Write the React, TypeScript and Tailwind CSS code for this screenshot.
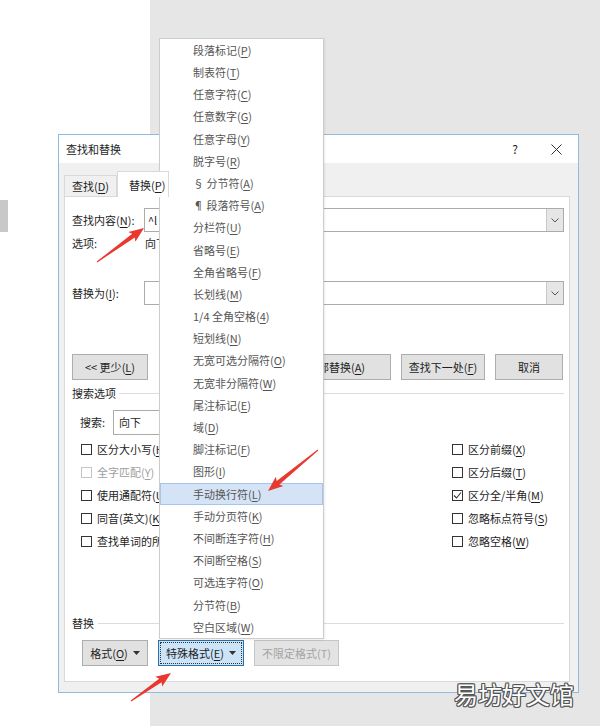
import React from "react";

// accelerator letter inside "(X)" gets underlined
const Acc = ({ text }: { text: string }) => {
  const m = text.match(/^(.*)\((.)\)(.*)$/);
  if (!m) return <>{text}</>;
  return (
    <>
      {m[1]}(<span className="underline underline-offset-2">{m[2]}</span>){m[3]}
    </>
  );
};

const menuItems = [
  "段落标记(P)",
  "制表符(T)",
  "任意字符(C)",
  "任意数字(G)",
  "任意字母(Y)",
  "脱字号(R)",
  "§ 分节符(A)",
  "¶ 段落符号(A)",
  "分栏符(U)",
  "省略号(E)",
  "全角省略号(F)",
  "长划线(M)",
  "1/4 全角空格(4)",
  "短划线(N)",
  "无宽可选分隔符(O)",
  "无宽非分隔符(W)",
  "尾注标记(E)",
  "域(D)",
  "脚注标记(F)",
  "图形(I)",
  "手动换行符(L)",
  "手动分页符(K)",
  "不间断连字符(H)",
  "不间断空格(S)",
  "可选连字符(O)",
  "分节符(B)",
  "空白区域(W)",
];

const leftChecks = [
  { label: "区分大小写(H)" },
  { label: "全字匹配(Y)", disabled: true },
  { label: "使用通配符(U)" },
  { label: "同音(英文)(K)" },
  { label: "查找单词的所有形式(英文)(W)" },
];

const rightChecks = [
  { label: "区分前缀(X)" },
  { label: "区分后缀(T)" },
  { label: "区分全/半角(M)", checked: true },
  { label: "忽略标点符号(S)" },
  { label: "忽略空格(W)" },
];

function arrowPoints(x1: number, y1: number, x2: number, y2: number) {
  const dx = x2 - x1;
  const dy = y2 - y1;
  const len = Math.hypot(dx, dy);
  const ux = dx / len;
  const uy = dy / len;
  const nx = -uy;
  const ny = ux;
  const headLen = 13;
  const headW = 6;
  const neckW = 2.2;
  const tailW = 0.5;
  const bx = x2 - ux * headLen;
  const by = y2 - uy * headLen;
  const pts = [
    [x1 + nx * tailW, y1 + ny * tailW],
    [bx + nx * neckW, by + ny * neckW],
    [bx + nx * headW - ux * 2, by + ny * headW - uy * 2],
    [x2, y2],
    [bx - nx * headW - ux * 2, by - ny * headW - uy * 2],
    [bx - nx * neckW, by - ny * neckW],
    [x1 - nx * tailW, y1 - ny * tailW],
  ];
  return pts.map((p) => p.map((v) => v.toFixed(1)).join(",")).join(" ");
}

const Caret = () => (
  <svg width="7" height="4" viewBox="0 0 7 4" className="ml-[5px]">
    <path d="M0 0h7L3.5 4z" fill="#333" />
  </svg>
);

const CheckBox = ({
  label,
  checked,
  disabled,
}: {
  label: string;
  checked?: boolean;
  disabled?: boolean;
}) => (
  <div className="h-[23px] flex items-center">
    <div
      className={`w-[11px] h-[11px] border bg-white flex items-center justify-center ${
        disabled ? "border-[#c4c4c4]" : "border-[#333]"
      }`}
    >
      {checked && (
        <svg width="9" height="9" viewBox="0 0 9 9">
          <polyline points="1,4.5 3.5,7 8,1.5" fill="none" stroke="#333" strokeWidth="1.1" />
        </svg>
      )}
    </div>
    <span className={`ml-[5px] ${disabled ? "text-[#a0a0a0]" : ""}`}>
      <Acc text={label} />
    </span>
  </div>
);

const Btn = ({ label, w, caret }: { label: string; w: string; caret?: boolean }) => (
  <div
    className={`${w} h-[26px] bg-[#e1e1e1] border border-[#adadad] flex items-center justify-center`}
  >
    <Acc text={label} />
    {caret && <Caret />}
  </div>
);

function Dialog() {
  return (
    <div className="absolute left-[58px] top-[134px] w-[521px] h-[559px] border border-[#8fbbe0] bg-[#f0f0f0] flex flex-col text-[11px] text-[#1e1e1e]">
      <div className="h-[28px] bg-white flex items-center pl-[7px] pr-[16px]">
        <span>查找和替换</span>
        <span className="ml-auto text-[12px]">?</span>
        <svg width="11" height="11" viewBox="0 0 11 11" className="ml-[33px]">
          <path d="M0.5 0.5L10.5 10.5M10.5 0.5L0.5 10.5" stroke="#333" strokeWidth="1" />
        </svg>
      </div>

      <div className="h-[33px] flex items-end pl-[5px]">
        <div className="h-[21px] px-[7px] border border-b-0 border-[#d9d9d9] flex items-center">
          <Acc text="查找(D)" />
        </div>
        <div className="relative z-10 -mb-px h-[26px] w-[52px] pl-[11px] pt-[2px] bg-white border border-b-0 border-[#d9d9d9] flex items-center">
          <Acc text="替换(P)" />
        </div>
      </div>

      <div className="ml-[5px] w-[506px] h-[486px] bg-white border border-[#d9d9d9] pl-[7px] pr-[5px] flex flex-col">
        <div className="mt-[11px] h-[24px] flex items-center">
          <span className="w-[72px]">
            <Acc text="查找内容(N):" />
          </span>
          <div className="flex-1 h-full border border-[#ababab] flex items-center pl-[3px]">
            <span>^l</span>
            <div className="ml-auto h-full w-[17px] bg-[#e6e6e6] border-l border-[#c8c8c8] flex items-center justify-center">
              <svg width="8" height="5" viewBox="0 0 8 5">
                <path d="M0.5 0.5L4 4L7.5 0.5" fill="none" stroke="#555" strokeWidth="1" />
              </svg>
            </div>
          </div>
        </div>

        <div className="mt-[3px] h-[16px] flex items-center">
          <span className="w-[72px]">选项:</span>
          <span className="pl-[1px]">向下, 区分全/半角</span>
        </div>

        <div className="mt-[30px] h-[24px] flex items-center">
          <span className="w-[72px]">
            <Acc text="替换为(I):" />
          </span>
          <div className="flex-1 h-full border border-[#ababab] flex items-center">
            <div className="ml-auto h-full w-[17px] bg-[#e6e6e6] border-l border-[#c8c8c8] flex items-center justify-center">
              <svg width="8" height="5" viewBox="0 0 8 5">
                <path d="M0.5 0.5L4 4L7.5 0.5" fill="none" stroke="#555" strokeWidth="1" />
              </svg>
            </div>
          </div>
        </div>

        <div className="mt-[49px] h-[26px] flex">
          <Btn label="<< 更少(L)" w="w-[76px]" />
          <div className="ml-auto flex gap-[10px] mr-[1px]">
            <Btn label="替换(R)" w="w-[100px]" />
            <Btn label="全部替换(A)" w="w-[110px]" />
            <Btn label="查找下一处(F)" w="w-[84px]" />
            <Btn label="取消" w="w-[68px]" />
          </div>
        </div>

        <div className="mt-[6px] h-[14px] flex items-center">
          <span>搜索选项</span>
          <div className="ml-[3px] flex-1 h-px bg-[#dcdcdc]" />
        </div>

        <div className="mt-[10px] h-[25px] flex items-center pl-[8px]">
          <span className="w-[33px]">
            <Acc text="搜索:" />
          </span>
          <div className="w-[90px] h-full border border-[#ababab] flex items-center pl-[5px]">向下</div>
        </div>

        <div className="mt-[3px] flex">
          <div className="w-[380px] pl-[9px] flex flex-col">
            {leftChecks.map((c) => (
              <CheckBox key={c.label} label={c.label} disabled={c.disabled} />
            ))}
          </div>
          <div className="flex flex-col">
            {rightChecks.map((c) => (
              <CheckBox key={c.label} label={c.label} checked={c.checked} />
            ))}
          </div>
        </div>

        <div className="mt-[63px] h-[14px] flex items-center">
          <span>替换</span>
          <div className="ml-[4px] flex-1 h-px bg-[#dcdcdc]" />
        </div>

        <div className="mt-[10px] h-[26px] flex pl-[10px] gap-[10px]">
          <Btn label="格式(O)" w="w-[66px]" caret />
          <div className="w-[86px] h-[26px] bg-[#cce4f7] border border-[#2b6fa8] outline-1 outline-dotted outline-[#333] outline-offset-[-3px] flex items-center justify-center">
            <Acc text="特殊格式(E)" />
            <Caret />
          </div>
          <div className="w-[85px] h-[26px] bg-[#e3e3e3] border border-[#c6c6c6] text-[#a3a3a3] flex items-center justify-center">
            不限定格式(T)
          </div>
        </div>
      </div>
    </div>
  );
}

function SpecialMenu() {
  return (
    <div className="absolute left-[159px] top-[38px] w-[165px] bg-white border border-[#cccccc] shadow-[1px_1px_2px_rgba(0,0,0,0.08)] flex flex-col text-[11px] text-[#555]">
      {menuItems.map((item, i) => (
        <div
          key={i}
          className={`h-[22.2px] pl-[32px] flex items-center border ${
            i === 20 ? "bg-[#d5e3f6] border-[#a8c4e8]" : "border-transparent"
          }`}
        >
          <Acc text={item} />
        </div>
      ))}
    </div>
  );
}

export default function App() {
  return (
    <div className="relative w-[600px] h-[726px] overflow-hidden flex font-['Noto_Sans_CJK_SC','Noto_Sans',sans-serif]">
      <div className="w-[150px] bg-white pt-[200px]">
        <div className="w-[8px] h-[32px] bg-[#c8c8c8]" />
      </div>
      <div className="flex-1 bg-[#e6e6e6]" />

      <Dialog />
      <SpecialMenu />

      <svg className="absolute inset-0 pointer-events-none" width="600" height="726" viewBox="0 0 600 726">
        <polygon points={arrowPoints(97, 262, 144, 228)} fill="#e8382f" />
        <polygon points={arrowPoints(318, 450, 268, 491)} fill="#e8382f" />
        <polygon points={arrowPoints(131, 701, 171, 673)} fill="#e8382f" />
      </svg>

      <div className="absolute left-[454px] top-[682px] text-[24px] leading-none text-white [text-shadow:1px_0_0_#555,-1px_0_0_#555,0_1px_0_#555,0_-1px_0_#555,1px_1px_0_#555,-1px_-1px_0_#555,1px_-1px_0_#555,-1px_1px_0_#555]">
        易坊好文馆
      </div>
    </div>
  );
}
